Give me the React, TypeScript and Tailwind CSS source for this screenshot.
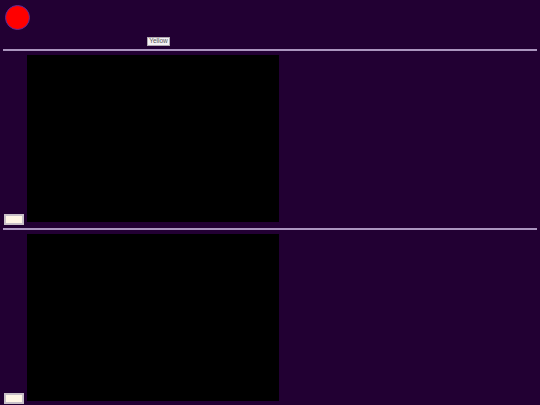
import React from "react";

function Section() {
  return (
    <div className="flex items-end pt-[4px] pb-[4px]">
      <div className="ml-[4px] w-[20px] h-[11px] bg-[#fff6e6] border-2 border-[#c8c0c8] shrink-0" />
      <div className="ml-[3px] w-[252px] h-[167px] bg-black shrink-0 mb-[3px]" />
    </div>
  );
}

export default function App() {
  return (
    <div
      className="w-[540px] h-[405px] overflow-hidden bg-[#220033]"
      style={{ fontFamily: '"Liberation Sans", Arial, sans-serif' }}
    >
      <div className="flex items-end h-[49px]">
        <div className="ml-[5px] mb-[19px] w-[25px] h-[25px] rounded-full bg-[#ff0000] border border-[#5a2a9a] shrink-0" />
        <button className="ml-[117px] mb-[3px] w-[23px] h-[9px] bg-[#f4f2f4] border border-[#b0a8b0] text-[6.5px] leading-none text-[#555555] flex items-center justify-center px-0">
          Yellow
        </button>
      </div>
      <div className="mx-[3px] h-[2px] bg-[#ab95bf]" />
      <Section />
      <div className="mx-[3px] h-[2px] bg-[#ab95bf] -mt-[1px]" />
      <Section />
    </div>
  );
}
